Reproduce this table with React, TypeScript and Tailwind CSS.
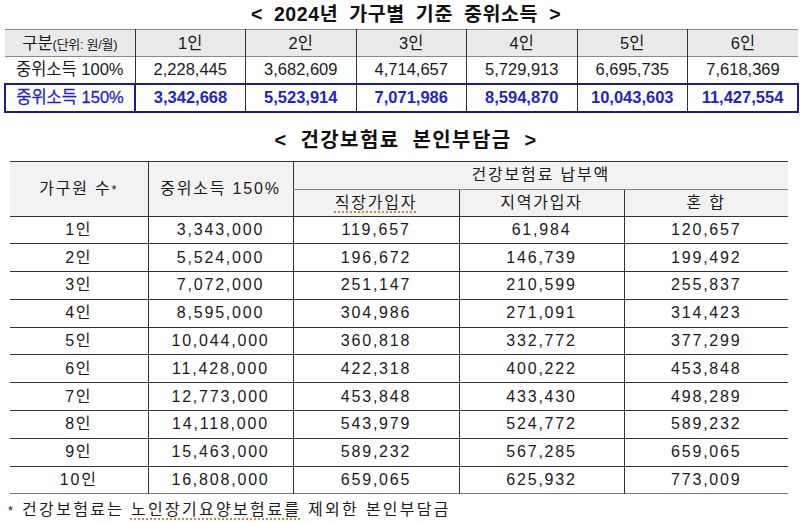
const font = "font-['Liberation_Sans','Noto_Sans_CJK_KR',sans-serif]";

const people = ["1인", "2인", "3인", "4인", "5인", "6인"];
const median100 = ["2,228,445", "3,682,609", "4,714,657", "5,729,913", "6,695,735", "7,618,369"];
const median150 = ["3,342,668", "5,523,914", "7,071,986", "8,594,870", "10,043,603", "11,427,554"];

// 가구원 수, 중위소득 150%, 직장, 지역, 혼합
const premiums: [string, string, string, string, string][] = [
  ["1인", "3,343,000", "119,657", "61,984", "120,657"],
  ["2인", "5,524,000", "196,672", "146,739", "199,492"],
  ["3인", "7,072,000", "251,147", "210,599", "255,837"],
  ["4인", "8,595,000", "304,986", "271,091", "314,423"],
  ["5인", "10,044,000", "360,818", "332,772", "377,299"],
  ["6인", "11,428,000", "422,318", "400,222", "453,848"],
  ["7인", "12,773,000", "453,848", "433,430", "498,289"],
  ["8인", "14,118,000", "543,979", "524,772", "589,232"],
  ["9인", "15,463,000", "589,232", "567,285", "659,065"],
  ["10인", "16,808,000", "659,065", "625,932", "773,009"],
];

const squiggle =
  "underline decoration-dotted decoration-[#e0803a] decoration-2 underline-offset-[4px]";

function MedianTable() {
  const cell = "border-l border-[#333] text-center first:border-l-0";
  return (
    <table className="ml-[4px] w-[795px] table-fixed border-collapse text-[16.5px] text-[#1a1a1a]">
      <colgroup>
        <col className="w-[130px]" />
        {people.map((p) => (
          <col key={p} />
        ))}
      </colgroup>
      <tbody>
        <tr className="h-[27px] border-y border-[#8a8a8a] bg-[#eaeaea]">
          <td className={cell}>
            구분<span className="text-[13px] tracking-[-0.3px]">(단위: 원/월)</span>
          </td>
          {people.map((p) => (
            <td key={p} className={cell}>
              {p}
            </td>
          ))}
        </tr>
        <tr className="h-[27px]">
          <td className={cell}>중위소득 100%</td>
          {median100.map((v) => (
            <td key={v} className={cell}>
              {v}
            </td>
          ))}
        </tr>
        <tr className="h-[28px] font-bold text-[#1f1fd4]">
          <td className="border-2 border-[#1c1c8f] text-center font-normal [-webkit-text-stroke:0.3px_#1f1fd4]">
            중위소득 150%
          </td>
          {median150.map((v, i) => (
            <td
              key={v}
              className={`border-y-2 border-l border-[#333] border-y-[#1c1c8f] text-center ${
                i === median150.length - 1 ? "border-r-2 border-r-[#1c1c8f]" : ""
              }`}
            >
              {v}
            </td>
          ))}
        </tr>
      </tbody>
    </table>
  );
}

function PremiumTable() {
  const head = "bg-[#f2f2f2] text-center font-normal";
  return (
    <table className="ml-[10px] w-[778px] table-fixed border-collapse text-[16px] tracking-[1.8px] text-[#1a1a1a]">
      <colgroup>
        <col className="w-[138px]" />
        <col className="w-[145px]" />
        <col className="w-[166px]" />
        <col className="w-[165px]" />
        <col />
      </colgroup>
      <thead>
        <tr className="h-[28px] border-t border-[#333]">
          <th rowSpan={2} className={head}>
            가구원 수<span className="text-[13px]">*</span>
          </th>
          <th rowSpan={2} className={`${head} border-l border-[#333]`}>
            중위소득 150%
          </th>
          <th colSpan={3} className={`${head} border-l border-b border-[#333] border-b-[#888]`}>
            건강보험료 납부액
          </th>
        </tr>
        <tr className="h-[27px]">
          <th className={`${head} border-l border-[#333]`}>
            <span className={squiggle}>직장가입자</span>
          </th>
          <th className={`${head} border-l border-[#333]`}>지역가입자</th>
          <th className={`${head} border-l border-[#333]`}>혼 합</th>
        </tr>
      </thead>
      <tbody>
        {premiums.map((row) => (
          <tr key={row[0]} className="h-[27.8px] border-t border-[#333] last:border-b last:border-b-[#777]">
            {row.map((v, i) => (
              <td key={i} className={`text-center ${i > 0 ? "border-l border-[#333]" : ""}`}>
                {v}
              </td>
            ))}
          </tr>
        ))}
      </tbody>
    </table>
  );
}

export default function App() {
  return (
    <div className={`h-[522px] w-[812px] overflow-hidden bg-white ${font}`}>
      <div className="flex h-[29px] items-center justify-center text-[19.5px] font-bold tracking-[0.6px] text-[#111] [word-spacing:5px]">
        &lt; 2024년 가구별 기준 중위소득 &gt;
      </div>
      <MedianTable />
      <div className="flex h-[48px] items-center justify-center pt-[6px] text-[20px] font-bold tracking-[1.4px] text-[#111] [word-spacing:6px]">
        &lt; 건강보험료 본인부담금 &gt;
      </div>
      <PremiumTable />
      <div className="pl-[8px] pt-[5px] text-[16px] leading-[22px] tracking-[2.3px] text-[#1a1a1a]">
        <span className="text-[13px]">*</span> 건강보험료는{" "}
        <span className="underline decoration-dotted decoration-[#e0803a] decoration-2 underline-offset-[3px]">
          노인장기요양보험료를
        </span>{" "}
        제외한 본인부담금
      </div>
    </div>
  );
}
